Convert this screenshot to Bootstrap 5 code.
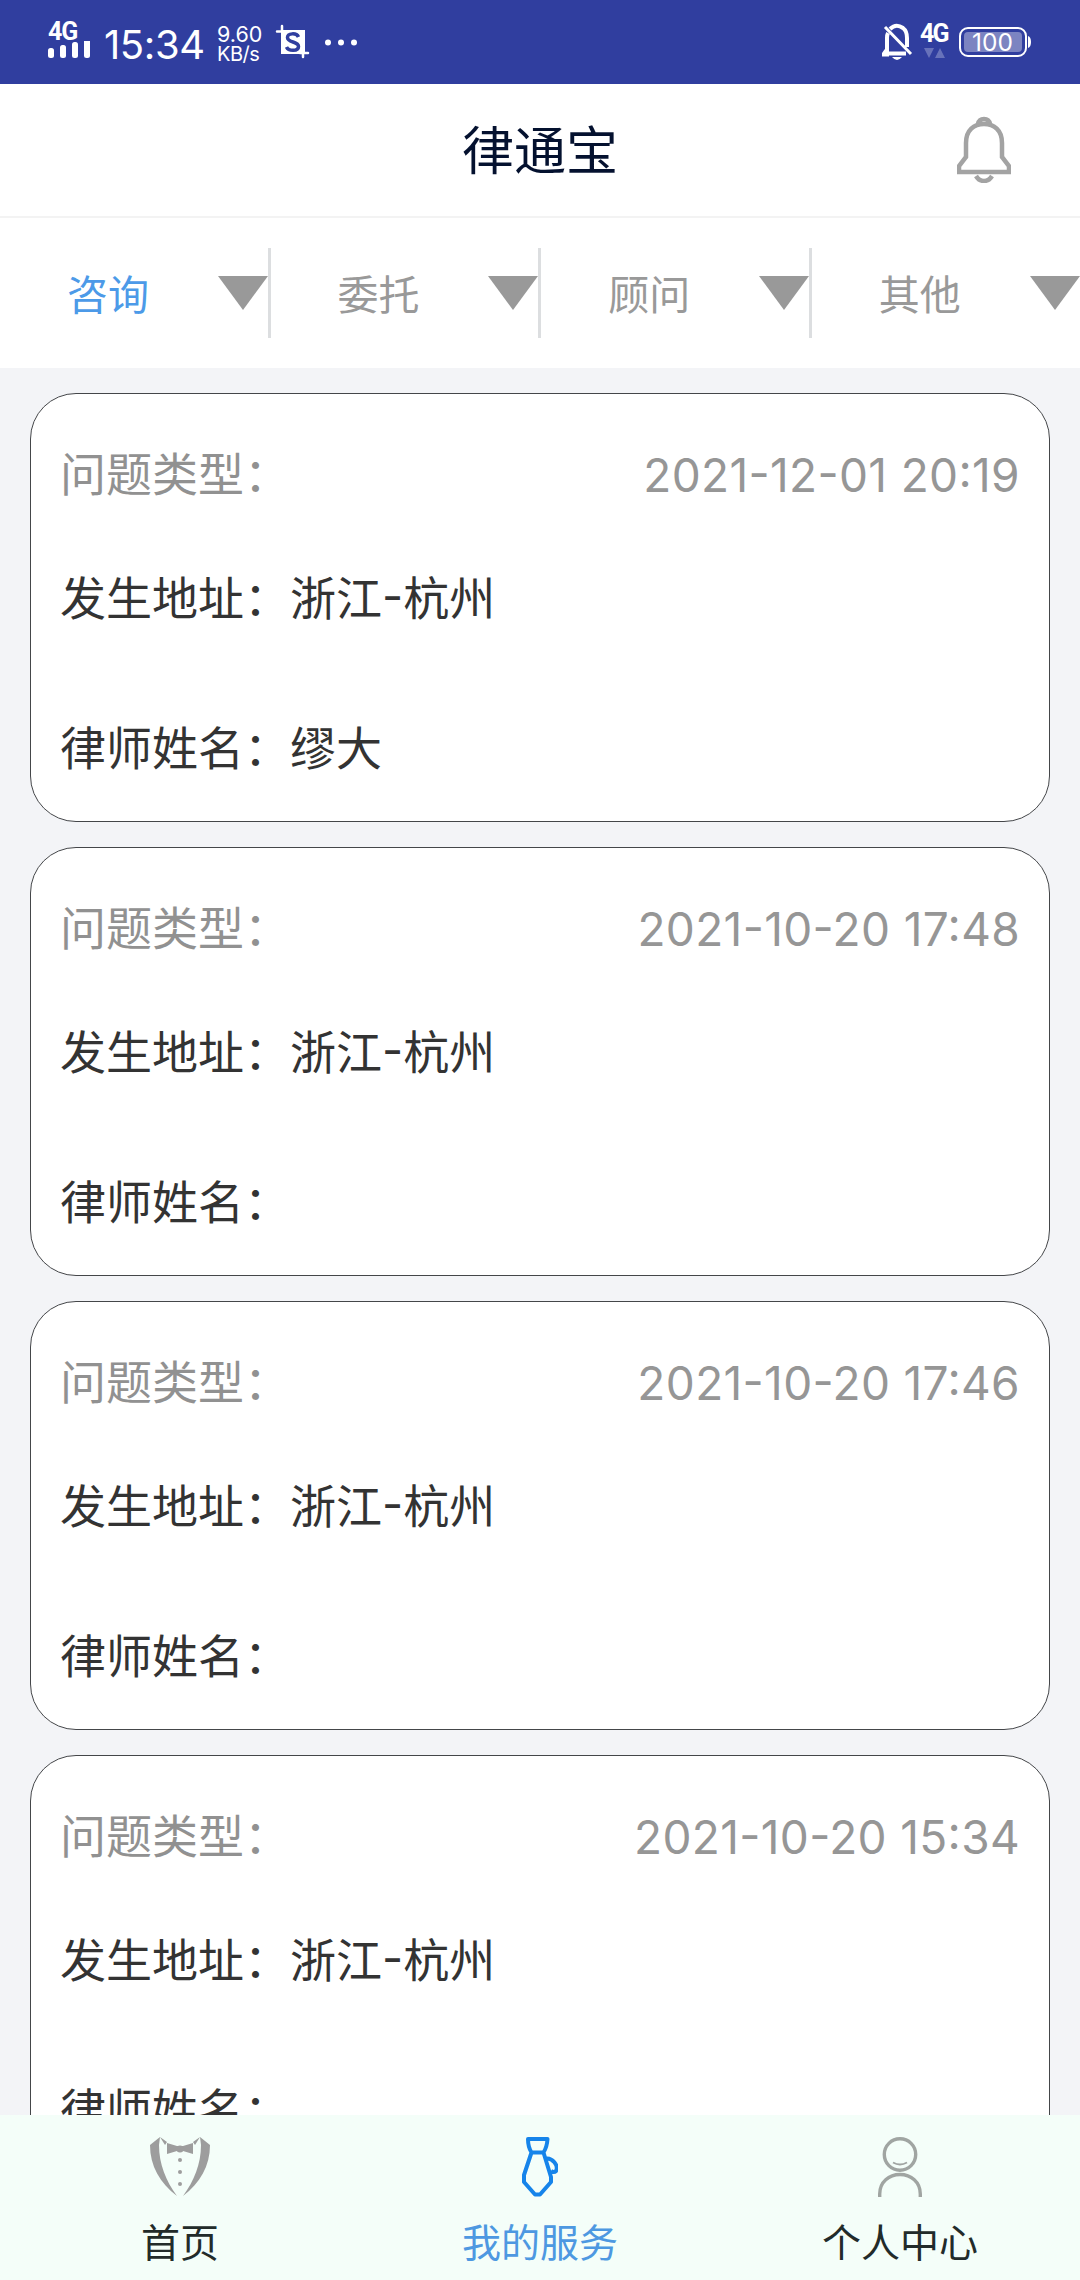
<!DOCTYPE html>
<html lang="zh-CN">
<head>
<meta charset="utf-8">
<meta name="viewport" content="width=device-width, initial-scale=1">
<title>律通宝</title>
<link href="https://cdn.jsdelivr.net/npm/bootstrap@5.3.0/dist/css/bootstrap.min.css" rel="stylesheet">
<style>
  body { font-family: Inter, "Noto Sans CJK SC", sans-serif; background: #f3f4f7; color: #333; }
  svg { display: block; flex: none; }
  .screen { width: 1080px; height: 2280px; }
  .status-bar { height: 84px; background: #303e9f; color: #fff; padding: 0 48px 0 48px; }
  .net-label { font-family: Roboto, sans-serif; font-size: 25px; line-height: 18px; font-weight: 700; letter-spacing: -1px; }
  .net-pair { width: 39px; padding-top: 25px; }
  .net-pair .net-label { letter-spacing: -1.8px; }
  .signal { width: 42px; margin-right: 14px; padding-top: 23px; }
  .clock { font-size: 40px; line-height: 84px; width: 113px; padding-top: 3px; letter-spacing: -.4px; }
  .speed { font-size: 21.5px; line-height: 20px; width: 58px; padding-top: 24px; }
  .speed .unit { font-size: 20px; letter-spacing: -.5px; }
  .title-bar { height: 134px; border-bottom: 2px solid #f3f3f3; color: #04112f; font-size: 52px; line-height: 136px; }
  .alarm { right: 69px; top: 32px; }
  .tabs { height: 150px; padding-top: 30px; }
  .tab-item { width: 270.6px; height: 90px; flex: none; border-right: 3px solid #dcdee0; color: #999; font-size: 41px; line-height: 95px; padding-left: 67px; }
  .tab-item.active { color: #4c9ae8; }
  .tab-item:last-child { border-right: 0; width: 268px; }
  .cards { padding: 25px 30px 0; gap: 25px; height: 1747px; }
  .case-card { height: 429px; flex: none; border: 1px solid #444649; border-radius: 46px; padding: 50px 29px 0; font-size: 46px; line-height: 60px; background: #fff; font-feature-settings: "case"; }
  .case-card .meta { color: #919191; margin-bottom: 64px; }
  .case-card .place { margin-bottom: 90px; }
  .stamp { font-weight: 400; color: #969696; padding-top: 1px; margin-bottom: -1px; letter-spacing: .35px; }
  .bottom-nav { height: 165px; background: #f4fef9; font-size: 39px; line-height: 50px; color: #222b2a; }
  .bottom-nav .entry { width: 360px; padding-top: 22px; gap: 21px; }
  .bottom-nav .active { color: #4d98e1; }
</style>
</head>
<body>
<div class="screen d-flex flex-column overflow-hidden">
  <header class="status-bar d-flex justify-content-between">
    <div class="d-flex">
      <div class="signal">
        <div class="net-label">4G</div>
        <svg width="42" height="20" fill="#fff"><rect y="7" width="6" height="10" rx="2.5"/><rect x="12" y="4" width="6" height="13" rx="2.5"/><rect x="24" y="1" width="6" height="16" rx="2.5"/><rect x="36" y="-2" width="6" height="19" rx="2.5"/></svg>
      </div>
      <div class="clock">15:34</div>
      <div class="speed">9.60<div class="unit">KB/s</div></div>
      <svg width="84" height="84" viewBox="0 0 84 84"><path d="M7 26v6M2 31.500h7M28 57v-6M33 53h-8" stroke="#fff" stroke-width="2.500" stroke-linecap="round"/><path d="M6 30h24v24H6z" fill="#fff"/><path d="M23.500 37c-2-4.500-11-4-11 .5 0 5.500 11 3.500 11 9 0 5-10 5-12 .5" fill="none" stroke="#303e9f" stroke-width="3.500"/><g fill="#fff"><circle cx="53" cy="42.500" r="3"/><circle cx="66" cy="42.500" r="3"/><circle cx="79" cy="42.500" r="3"/></g></svg>
    </div>
    <div class="d-flex">
      <svg width="38" height="84" viewBox="882 0 38 84" fill="none"><path d="M887 53V38q0-3 1-5M890 29q6-6 13-1 4 3 4 10v9M884 53.500h22" stroke="#fff" stroke-width="4"/><path d="M882.500 55l5-7v7zM885 27l26 27" stroke="#fff" stroke-width="3"/><path d="M892 57h10q-5 6-10 0z" fill="#fff"/></svg>
      <div class="net-pair"><div class="net-label">4G</div>
        <svg width="34" height="18" fill="#6772ba"><path d="M4 5h10l-5 10zM15 15h10l-5-10z"/></svg></div>
      <svg width="73" height="84" viewBox="960 0 73 84"><rect x="961" y="28" width="66" height="28" rx="8" fill="none" stroke="#fff" stroke-width="2"/><rect x="965" y="32" width="58" height="20" rx="4" fill="#7c84c1"/><path d="M1029 36q3 1 3 6t-3 6z" fill="#fff"/><text x="993.500" y="51" font-size="24.500" text-anchor="middle" fill="#fff">100</text></svg>
    </div>
  </header>
  <div class="title-bar bg-white text-center position-relative">律通宝
    <svg class="alarm position-absolute" width="54" height="67" viewBox="0 0 54 67" fill="none" stroke="#a3a3a3" stroke-width="4.500"><path d="M9 41V27C9 14 17 8 27 8s18 6 18 19v14l7 9v6H2V50zM21 8q1-5 6-5t6 5M19 60q3 5 8 5t8-5"/></svg>
  </div>
  <nav class="tabs bg-white d-flex overflow-hidden">
    <div class="tab-item active d-flex justify-content-between">咨询<svg width="50" height="90" viewBox="0 0 50 90"><path d="M0 28h50L25 62z" fill="#999"/></svg></div>
    <div class="tab-item d-flex justify-content-between">委托<svg width="50" height="90" viewBox="0 0 50 90"><path d="M0 28h50L25 62z" fill="#999"/></svg></div>
    <div class="tab-item d-flex justify-content-between">顾问<svg width="50" height="90" viewBox="0 0 50 90"><path d="M0 28h50L25 62z" fill="#999"/></svg></div>
    <div class="tab-item d-flex justify-content-between">其他<svg width="50" height="90" viewBox="0 0 50 90"><path d="M0 28h50L25 62z" fill="#999"/></svg></div>
  </nav>
  <main class="cards d-flex flex-column overflow-hidden">
    <section class="case-card"><div class="meta d-flex justify-content-between"><span>问题类型：</span><span class="stamp">2021-12-01 20:19</span></div><div class="place">发生地址：浙江-杭州</div><div>律师姓名：缪大</div></section>
    <section class="case-card"><div class="meta d-flex justify-content-between"><span>问题类型：</span><span class="stamp">2021-10-20 17:48</span></div><div class="place">发生地址：浙江-杭州</div><div>律师姓名：</div></section>
    <section class="case-card"><div class="meta d-flex justify-content-between"><span>问题类型：</span><span class="stamp">2021-10-20 17:46</span></div><div class="place">发生地址：浙江-杭州</div><div>律师姓名：</div></section>
    <section class="case-card"><div class="meta d-flex justify-content-between"><span>问题类型：</span><span class="stamp">2021-10-20 15:34</span></div><div class="place">发生地址：浙江-杭州</div><div>律师姓名：</div></section>
  </main>
  <footer class="bottom-nav d-flex">
    <div class="entry d-flex flex-column align-items-center">
      <svg width="60" height="60" viewBox="0 0 60 60" fill="#9d9d9d"><path d="M10 0L0 8C0 29 10 46 27 59 16 44 9 27 9 8zM50 0l10 8C60 29 50 46 33 59 44 44 51 27 51 8zM10 0l7 5-2 3zM50 0l-7 5 2 3z"/><path d="M17 6l10 3h6l10-3v11l-10-3h-6l-10 3z"/><circle cx="30" cy="12" r="3.500"/><circle cx="30" cy="23" r="2"/><circle cx="30" cy="35" r="2"/><circle cx="30" cy="47" r="2"/></svg>
      <span>首页</span></div>
    <div class="entry active d-flex flex-column align-items-center">
      <svg width="36" height="60" viewBox="0 0 36 60" fill="none" stroke="#1684ea" stroke-width="4" stroke-linejoin="round"><path d="M6 2h19.500q-.5 8-4 13.500h-12Q6 10 6 2zM9.500 15.500L2 38v7l11 12.500h5L29 45v-5L21.500 15.500M24 21.500c6-1 13 7 10 12.500q-2 2-5 0"/></svg>
      <span>我的服务</span></div>
    <div class="entry d-flex flex-column align-items-center">
      <svg width="44" height="60" viewBox="0 0 44 60" fill="none" stroke="#a0a5a2" stroke-width="3.400"><circle cx="22" cy="17.500" r="15.700"/><path d="M1.700 60V57C1.700 45 11 37.500 22 37.500S42.300 45 42.300 57v3"/><path d="M15 25.500q7 4 14 0" stroke-width="2"/></svg>
      <span>个人中心</span></div>
  </footer>
</div>
<script src="https://cdn.jsdelivr.net/npm/bootstrap@5.3.0/dist/js/bootstrap.bundle.min.js"></script>
</body>
</html>
